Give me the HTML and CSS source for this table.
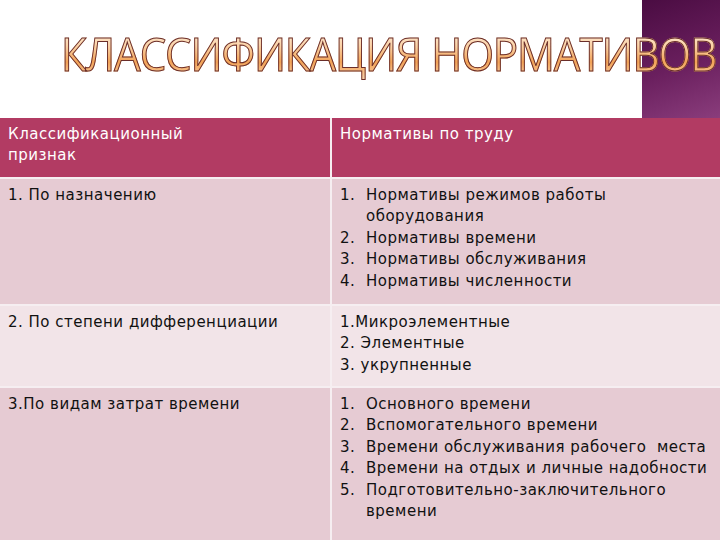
FILE: index.html
```html
<!DOCTYPE html>
<html lang="ru">
<head>
<meta charset="utf-8">
<link rel="stylesheet" href="styles.css">
</head>
<body>
<header class="top">
  <h1 class="title">КЛАССИФИКАЦИЯ НОРМАТИВОВ</h1>
</header>
<div class="table">
  <div class="cell head">Классификационный<br>признак</div>
  <div class="cell head">Нормативы по труду</div>

  <div class="cell dark">1. По назначению</div>
  <div class="cell dark">
    <div class="item"><span class="num">1.</span><span>Нормативы режимов работы оборудования</span></div>
    <div class="item"><span class="num">2.</span><span>Нормативы времени</span></div>
    <div class="item"><span class="num">3.</span><span>Нормативы обслуживания</span></div>
    <div class="item"><span class="num">4.</span><span>Нормативы численности</span></div>
  </div>

  <div class="cell light">2. По степени дифференциации</div>
  <div class="cell light">
    <div>1.Микроэлементные</div>
    <div>2. Элементные</div>
    <div>3. укрупненные</div>
  </div>

  <div class="cell dark last">3.По видам затрат времени</div>
  <div class="cell dark last">
    <div class="item"><span class="num">1.</span><span>Основного времени</span></div>
    <div class="item"><span class="num">2.</span><span>Вспомогательного времени</span></div>
    <div class="item"><span class="num">3.</span><span>Времени обслуживания рабочего&nbsp; места</span></div>
    <div class="item"><span class="num">4.</span><span>Времени на отдых и личные надобности</span></div>
    <div class="item"><span class="num">5.</span><span>Подготовительно-заключительного времени</span></div>
  </div>
</div>
</body>
</html>
```

FILE: styles.css
```css
html, body {
  margin: 0;
  padding: 0;
  background: #ffffff;
}
body {
  width: 720px;
  height: 540px;
  overflow: hidden;
  font-family: "DejaVu Sans", "Liberation Sans", sans-serif;
}
.top {
  height: 118px;
  box-sizing: border-box;
  padding: 27px 0 0 61px;
  overflow: hidden;
  background:
    linear-gradient(160deg, #4a0c42 0%, #6a1f5e 55%, #8a3d7c 100%) right top / 78px 118px no-repeat,
    #ffffff;
}
.title {
  margin: 0;
  font-family: "Open Sans", "DejaVu Sans", sans-serif;
  font-weight: 400;
  font-size: 45px;
  line-height: 54px;
  letter-spacing: -1.2px;
  white-space: nowrap;
  display: inline-block;
  transform: scaleX(0.937);
  transform-origin: left center;
  background: linear-gradient(180deg, #fff3e6 0%, #fbd2a6 35%, #f2a256 65%, #fbd9b6 100%);
  -webkit-background-clip: text;
  background-clip: text;
  color: transparent;
  -webkit-text-stroke: 1px #6a2e2a;
}
.table {
  display: grid;
  grid-template-columns: 330px 1fr;
  grid-template-rows: 59px 125px 80px 1fr;
  column-gap: 2px;
  row-gap: 2px;
  height: 422px;
  background: #f6eef1;
}
.cell {
  box-sizing: border-box;
  padding: 6px 8px 0 8px;
  font-size: 15px;
  line-height: 21.4px;
  letter-spacing: 0.5px;
  color: #111111;
}
.head {
  background: #b23b63;
  color: #ffffff;
}
.dark {
  background: #e6cbd3;
}
.light {
  background: #f2e4e8;
}
.item {
  display: flex;
}
.num {
  flex: 0 0 26px;
}
```
